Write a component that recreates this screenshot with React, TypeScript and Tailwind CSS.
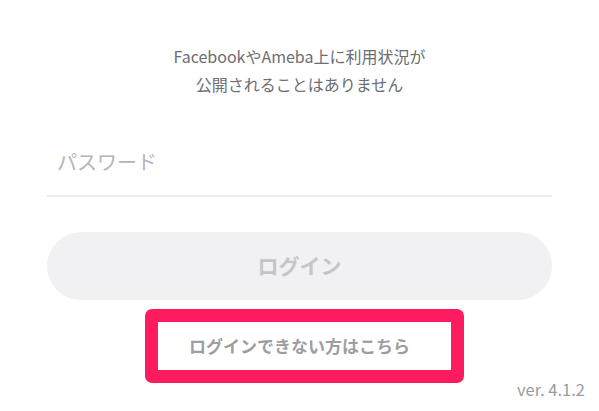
const font = { fontFamily: '"Noto Sans CJK JP", "Noto Sans", sans-serif' };

export default function App() {
  return (
    <div
      className="w-[599px] h-[411px] bg-white overflow-hidden flex flex-col"
      style={font}
    >
      <p className="pt-[42px] text-center text-[16px] leading-[28px] text-[#6d6d72]">
        FacebookやAmeba上に利用状況が
        <br />
        公開されることはありません
      </p>

      <div className="mx-[47px] mt-[29px] border-b-2 border-[#ececef]">
        <input
          type="password"
          placeholder="パスワード"
          className="w-full h-[68px] px-[10px] text-[20px] bg-transparent outline-none placeholder:text-[#b4b4b9]"
          style={font}
        />
      </div>

      <button
        className="mx-[47px] mt-[35px] h-[68px] rounded-full bg-[#f1f1f4] text-[21px] font-bold text-[#c4c4c9]"
        style={font}
      >
        ログイン
      </button>

      <div className="mt-[9px] flex justify-center pl-[9px]">
        <a
          href="#"
          className="w-[319px] h-[74px] pr-[9px] flex items-center justify-center border-[13px] border-[#fe1b5e] rounded-[7px] text-[17px] font-bold text-[#9d9da2]"
        >
          ログインできない方はこちら
        </a>
      </div>

      <div className="mt-[-4px] pr-[14px] flex justify-end text-[16.5px] leading-[20px] text-[#9b9b9f]">
        ver. 4.1.2
      </div>
    </div>
  );
}
